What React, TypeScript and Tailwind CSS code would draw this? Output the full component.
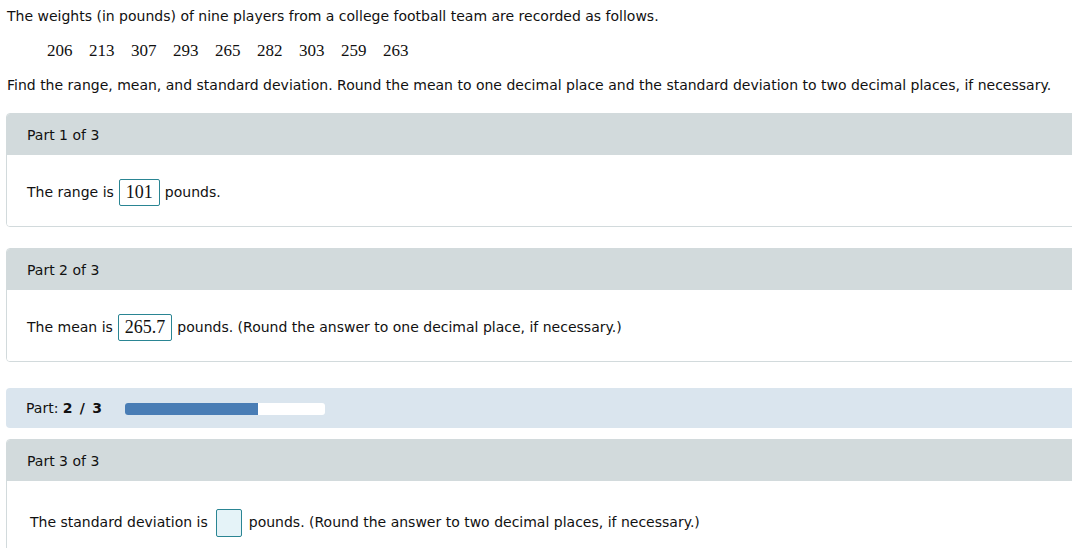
import React from 'react';

const weights = [206, 213, 307, 293, 265, 282, 303, 259, 263];

function Answer({ value }: { value?: string }) {
  if (!value) {
    return (
      <span className="ml-[8px] mr-[5px] inline-block h-[28px] w-[26px] rounded-[2px] border border-[#2a8593] bg-[#e5f3f8] align-middle" />
    );
  }
  return (
    <span className="mx-[5px] inline-flex h-[27px] items-center justify-center rounded-[2px] border border-[#2a8593] px-[6px] align-middle font-['Liberation_Serif',serif] text-[18px] text-[#111]">
      {value}
    </span>
  );
}

function PartCard({ title, children, bodyH }: { title: string; children: React.ReactNode; bodyH: string }) {
  return (
    <div className="mr-[-12px] overflow-hidden rounded-[4px] border border-[#d2dadc]">
      <div className="flex h-[41px] items-center bg-[#d2dadc] pl-[20px] pt-[1px]">{title}</div>
      <div className={`flex items-center bg-white pl-[20px] pt-[3px] ${bodyH}`}>{children}</div>
    </div>
  );
}

export default function App() {
  return (
    <div className="h-[548px] w-[1072px] overflow-hidden bg-white font-['DejaVu_Sans',Verdana,sans-serif] text-[14px] text-[#111]">
      <div className="pl-[7px] pt-[7px]">
        <p className="h-[18px] leading-[18px]">
          The weights (in pounds) of nine players from a college football team are recorded as follows.
        </p>
        <div className="mt-[16px] flex gap-[16.5px] pl-[40px] font-['Liberation_Serif',serif] text-[17px] leading-[20px]">
          {weights.map((w) => (
            <span key={w}>{w}</span>
          ))}
        </div>
        <p className="mt-[15px] h-[18px] leading-[18px]">
          Find the range, mean, and standard deviation. Round the mean to one decimal place and the standard deviation to
          two decimal places, if necessary.
        </p>
      </div>

      <div className="ml-[6px] mt-[19px] flex flex-col">
        <PartCard title="Part 1 of 3" bodyH="h-[71px]">
          <span>The range is</span>
          <Answer value="101" />
          <span>pounds.</span>
        </PartCard>

        <div className="mt-[21px]">
          <PartCard title="Part 2 of 3" bodyH="h-[71px]">
            <span>The mean is</span>
            <Answer value="265.7" />
            <span>pounds. (Round the answer to one decimal place, if necessary.)</span>
          </PartCard>
        </div>

        <div className="mr-[-12px] mt-[26px] flex h-[40px] items-center rounded-[4px] bg-[#dae5ee] pl-[20px] pt-[1px]">
          <span>
            Part: <b className="tracking-[1.2px]">2 / 3</b>
          </span>
          <div className="ml-[22px] h-[12px] w-[200px] overflow-hidden rounded-[3px] bg-white">
            <div className="h-full bg-[#497db5]" style={{ width: `${(2 / 3) * 100}%` }} />
          </div>
        </div>

        <div className="mt-[11px]">
          <PartCard title="Part 3 of 3" bodyH="h-[80px]">
            <span className="ml-[3px]">The standard deviation is</span>
            <Answer />
            <span className="ml-[2px]">pounds. (Round the answer to two decimal places, if necessary.)</span>
          </PartCard>
        </div>
      </div>
    </div>
  );
}
